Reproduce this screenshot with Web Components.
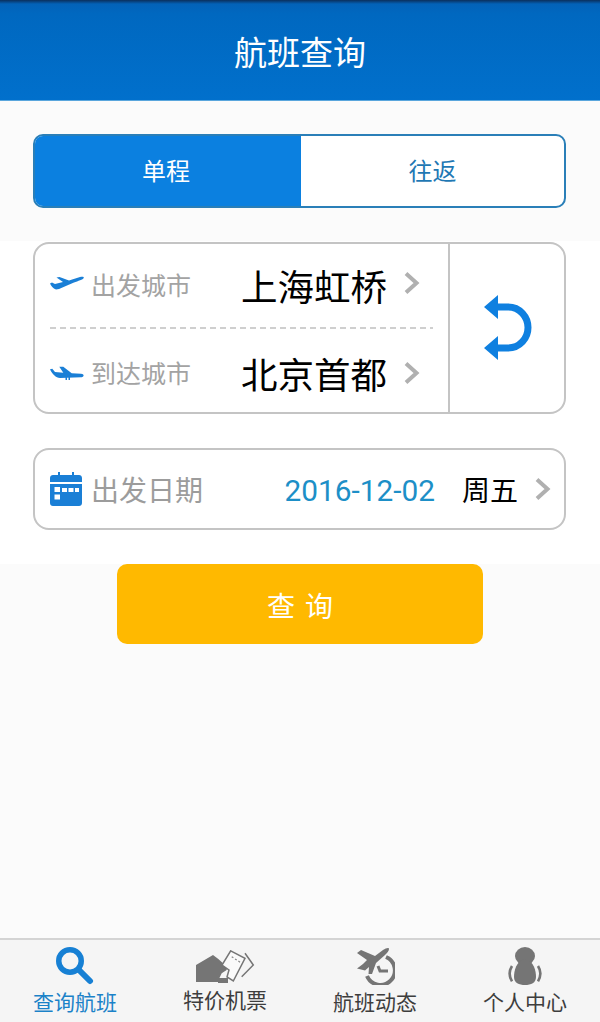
<!DOCTYPE html>
<html lang="zh-CN"><head><meta charset="utf-8"><title>航班查询</title>
<style>
html,body{margin:0;padding:0;height:100%}
body{width:600px;height:1022px;overflow:hidden;background:#fbfbfb;font-family:"Noto Sans CJK SC","Roboto",sans-serif;display:flex;flex-direction:column}
</style></head><body>
<flight-app></flight-app>
<script>
const FONT='"Noto Sans CJK SC",Roboto,sans-serif';
const def=(n,html)=>customElements.define(n,class extends HTMLElement{constructor(){super();this.attachShadow({mode:'open'}).innerHTML=html;}});
const chevron='<svg class="chev" width="16" height="24" viewBox="0 0 16 24"><path d="M2 2.500 12.500 12 2 21.500" fill="none" stroke="#b0b0b0" stroke-width="4"/></svg>';
const planeUp='<svg width="34" height="14" viewBox="0 0 34 14"><path d="M0 7.500 2 6.500 5 8 13 6 6.500 1.500 9.500 1 19 4.500 30 1C33 .3 34 1 33.800 2 33 3.500 28 5 24 6.500L17 9.500 9 13 6 13.500C3 12.500 1 10 0 7.500Z" fill="#1a7fd6"/></svg>';
const planeDown='<svg width="34" height="14" viewBox="0 0 34 14"><path d="M0 3.300 2.300 2.700 5 6 13.300 6.700 9.300 .7H13.300L21.700 7.300 31 7.800C33 8 34 9 33.500 10 33 11 32 11.300 31 11.300L10 12C6 12 2 8 0 3.300Z" fill="#1a7fd6"/><path d="M15.500 11h1.500v3h-1.500zM18.500 11h1.500v3h-1.500z" fill="#1a7fd6"/></svg>';

def('app-header',`<style>:host{display:flex;height:101px;box-sizing:border-box;align-items:center;justify-content:center;background:linear-gradient(#0b2f5c 0,#0362b8 4px,#0068c0 14px,#0170cc 100%);border-bottom:1px solid #5aa6dd;color:#fff;font:400 33px/1 ${FONT};padding-top:2px}</style><slot></slot>`);

def('trip-toggle',`<style>:host{display:flex;height:74px;box-sizing:border-box;border:2px solid #2a7fb8;border-radius:10px;overflow:hidden;background:#fff;font:400 24px/1 ${FONT}}
div{display:flex;align-items:center;justify-content:center;box-sizing:border-box;padding-bottom:2px}
.on{width:268px;background:#0b80e0;color:#fff;margin:-2px 0 -2px -2px;padding-right:2px}
.off{flex:1;color:#1f78b4}</style><div class="on">单程</div><div class="off">往返</div>`);

def('route-row',`<style>:host{display:flex;flex:none;align-items:center;height:83px;box-sizing:border-box;padding:0 28px 0 15px;--chev:6px;--ico:5px}
:host([slot=to]){padding-top:6px;--chev:2px;--ico:1px}
.l{color:#a3a3a3;font:400 25px/1 ${FONT};margin:0 0 2px 7px;flex:1}
.c{color:#000;font:400 36.500px/1 ${FONT};margin:2px 17px 0 0}
.ic{display:block;margin-bottom:var(--ico);line-height:0}
.chev{display:block;margin-bottom:var(--chev)}</style><span class="ic"><slot name="icon"></slot></span><span class="l"><slot name="label"></slot></span><span class="c"><slot name="city"></slot></span>${chevron}`);

def('route-card',`<style>:host{display:flex;height:172px;box-sizing:border-box;border:2px solid #c4c4c4;border-radius:16px;background:#fff;overflow:hidden}
.rows{width:413px;display:flex;flex-direction:column;box-sizing:border-box}
.d{height:2px;flex:none;margin:0 15px;background:repeating-linear-gradient(90deg,#cfcfcf 0 6px,transparent 6px 10px)}
.sw{flex:1;border-left:2px solid #c4c4c4;display:flex;align-items:center;justify-content:center}
</style><div class="rows"><slot name="from"></slot><div class="d"></div><slot name="to"></slot></div>
<div class="sw"><svg width="48" height="66" viewBox="0 0 48 66" style="margin-left:2px"><path d="M14 12H24C36 12 44 22 44 32.500S36 53 24 53H14" fill="none" stroke="#0f80e0" stroke-width="7"/><path d="M14 0V24L0 12zM14 41V65L0 53z" fill="#0f80e0"/></svg></div>`);

def('date-card',`<style>:host{display:flex;align-items:center;height:82px;box-sizing:border-box;border:2px solid #c4c4c4;border-radius:16px;background:#fff;padding:0 13px 0 15px}
svg{display:block}
.l{color:#9c9c9c;font:400 28px/1 ${FONT};margin-left:9px;flex:1}
.d{color:#1d8fc7;font:400 29.800px/1 Roboto,sans-serif;margin:4px 27px 0 0}
.w{color:#000;font:400 28px/1 ${FONT};margin-right:17px}
</style><svg width="32" height="34" viewBox="0 0 32 34"><path d="M3 3h5V0h2v3h12V0h2v3h5c1.700 0 3 1.300 3 3v4H0V6c0-1.700 1.300-3 3-3zM0 12h32v19c0 1.700-1.300 3-3 3H3c-1.700 0-3-1.300-3-3z" fill="#1a7fd6"/><path d="M4.500 15H10v5H4.500zM12 16h5v4h-5zM18.500 16h5v4h-5zM25 16h4v4h-4zM4.500 22.500H10v5H4.500z" fill="#fff"/></svg><span class="l"><slot name="label"></slot></span><span class="d"><slot name="date"></slot></span><span class="w"><slot name="week"></slot></span>${chevron}`);

def('search-button',`<style>:host{display:flex;box-sizing:border-box;width:366px;height:80px;margin:0 auto;background:#ffb900;border-radius:10px;align-items:center;justify-content:center;color:#fff;font:400 28px/1 ${FONT};letter-spacing:10px;padding:2px 0 0 10px}</style><slot></slot>`);

def('tab-item',`<style>:host{display:flex;flex-direction:column;align-items:center;flex:1;font:400 21px/1 ${FONT};color:#3d3d3d;height:100%;box-sizing:border-box}
:host([active]){color:#1b82c8}
.i{height:44px;flex:none;width:100%;display:flex;align-items:flex-start;justify-content:center}
</style><div class="i"><slot name="icon"></slot></div><slot></slot>`);

def('tab-bar',`<style>:host{display:flex;height:84px;box-sizing:border-box;border-top:2px solid #d4d4d4;background:#f5f5f5;padding-top:7px}</style><slot></slot>`);

def('flight-app',`<style>:host{display:flex;flex-direction:column;height:1022px;font-family:${FONT}}
.top{padding:33px 34px 33px 33px}
.band{background:#fff;padding:1px 34px 34px 33px;display:flex;flex-direction:column;gap:34px}
.grow{flex:1}
svg{display:block}
</style>
<app-header>航班查询</app-header>
<div class="top"><trip-toggle></trip-toggle></div>
<div class="band">
<route-card>
<route-row slot="from"><span slot="icon">${planeUp}</span><span slot="label">出发城市</span><span slot="city">上海虹桥</span></route-row>
<route-row slot="to"><span slot="icon">${planeDown}</span><span slot="label">到达城市</span><span slot="city">北京首都</span></route-row>
</route-card>
<date-card><span slot="label">出发日期</span><span slot="date">2016-12-02</span><span slot="week">周五</span></date-card>
</div>
<search-button>查询</search-button>
<div class="grow"></div>
<tab-bar>
<tab-item active><svg slot="icon" width="38" height="38" viewBox="0 0 38 38"><circle cx="14" cy="14" r="11.250" fill="none" stroke="#1780d4" stroke-width="5.500"/><path d="M23 23 34 34" stroke="#1780d4" stroke-width="6" stroke-linecap="round"/></svg><span>查询航班</span></tab-item>
<tab-item><svg slot="icon" style="margin-top:3px" width="60" height="36" viewBox="0 0 60 36"><path d="M1 15 18 5 23.300 9 32 16.700 31.700 20 26.700 23.300 24.300 28.300 24 32H1z" fill="#757575"/><path d="M23 28h10v5H23z" fill="#757575"/><path d="M50 3.300 58.300 15 46.700 26.700" fill="none" stroke="#757575" stroke-width="1.500"/><path d="M35.700 .8 50 8.300 38.300 31 32 27 34 20 27 15z" fill="#fafafa" stroke="#757575" stroke-width="1.500"/><path d="M36.700 6.700 46.700 13.300" stroke="#888" stroke-width="1.200" stroke-dasharray="2 2"/></svg><span style="margin-top:-2px">特价机票</span></tab-item>
<tab-item><svg slot="icon" width="40" height="38" viewBox="-1 0 40 38"><path d="M1 6 5 3 19 9 27 3C30 1 33 0 33 2 33 4 31 6 29 8L20 16 16 27H12.500L13 20 9 23.500 1 21.500 7 17 11 13Z" fill="#757575"/><path d="M30 10A14.500 14.500 0 1 1 11 29" fill="none" stroke="#757575" stroke-width="4"/><path d="M22 19 24 24H32" fill="none" stroke="#757575" stroke-width="3"/></svg><span>航班动态</span></tab-item>
<tab-item><svg slot="icon" width="34" height="38" viewBox="0 0 34 38"><ellipse cx="17" cy="9" rx="10" ry="9" fill="#757575"/><path d="M17 12C8 14 6 24 6 30 6 36 11 38 17 38S28 36 28 30C28 24 26 14 17 12Z" fill="#757575"/><path d="M4 19C.8 24 .8 29 4 34.300M30 19C33.200 24 33.200 29 30 34.300" fill="none" stroke="#757575" stroke-width="2.600"/></svg><span>个人中心</span></tab-item>
</tab-bar>`);
</script></body></html>
